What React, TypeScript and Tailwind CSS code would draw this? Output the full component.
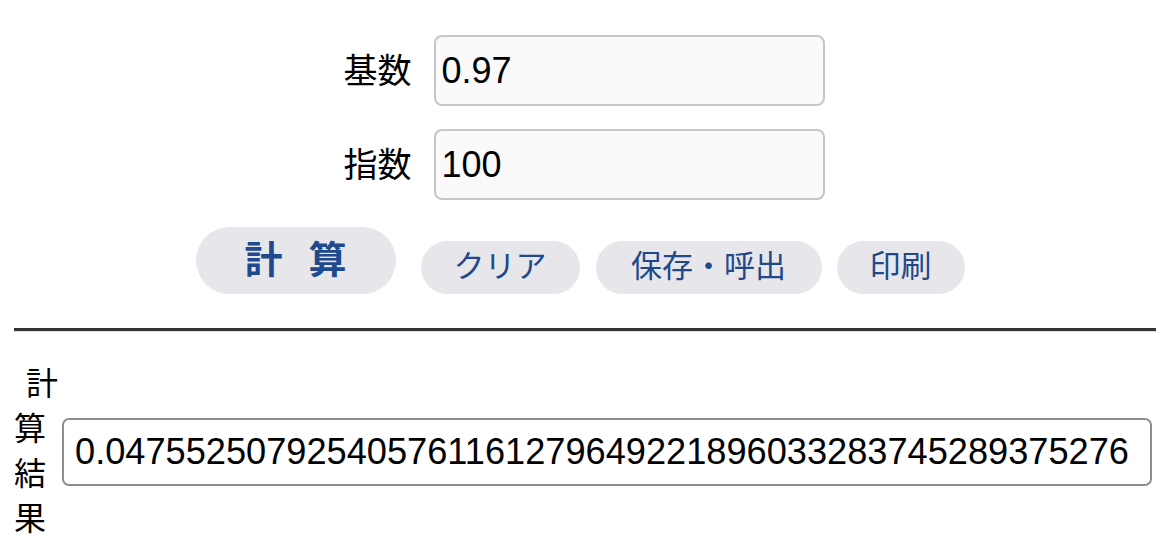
const cjk = "font-['Liberation_Sans','Noto_Sans_CJK_JP',sans-serif]";

function Field({ label, value }: { label: string; value: string }) {
  return (
    <div className="flex items-center gap-[22px]">
      <span className={`${cjk} text-[34px] leading-none text-black`}>{label}</span>
      <input
        readOnly
        value={value}
        className={`${cjk} w-[391px] h-[71px] rounded-[8px] border-2 border-[#c6c6c6] bg-[#fafafa] px-[6px] text-[36px] text-black outline-none`}
      />
    </div>
  );
}

const buttons = [
  { label: "クリア", cls: "w-[159px] ml-[25px]" },
  { label: "保存・呼出", cls: "w-[226px] ml-[16px]" },
  { label: "印刷", cls: "w-[128px] ml-[15px]" },
];

export default function App() {
  return (
    <div className="w-[1170px] h-[552px] bg-white overflow-hidden">
      <div className="flex flex-col items-center pt-[35px] pr-[2px]">
        <Field label="基数" value="0.97" />
        <div className="mt-[23px]">
          <Field label="指数" value="100" />
        </div>

        <div className="flex items-end mt-[27px] pr-[8px]">
          <button className={`${cjk} flex items-center justify-center gap-[26px] w-[200px] h-[67px] rounded-full bg-[#e7e7eb] text-[38px] font-bold text-[#1f4a8e]`}>
            <span>計</span>
            <span>算</span>
          </button>
          {buttons.map((b) => (
            <button
              key={b.label}
              className={`${cjk} ${b.cls} h-[53px] rounded-full bg-[#e7e7eb] text-[31px] text-[#22488a]`}
            >
              {b.label}
            </button>
          ))}
        </div>
      </div>

      {/* divider */}
      <div className="mx-[14px] mt-[34px] h-[4px] border-t-[3px] border-[#333] border-b border-b-[#dcdcdc]" />

      {/* result */}
      <div className="flex items-center mt-[30px] pl-[14px]">
        <div className={`${cjk} w-[48px] text-[32px] leading-[45px] text-black`}>
          <div className="pl-[12px]">計</div>
          <div>算</div>
          <div>結</div>
          <div>果</div>
        </div>
        <input
          readOnly
          value="0.047552507925405761161279649221896033283745289375276"
          className={`${cjk} w-[1090px] h-[68px] rounded-[7px] border-2 border-[#8e8e8e] bg-white pl-[11px] text-[36.2px] text-black outline-none`}
        />
      </div>
    </div>
  );
}
